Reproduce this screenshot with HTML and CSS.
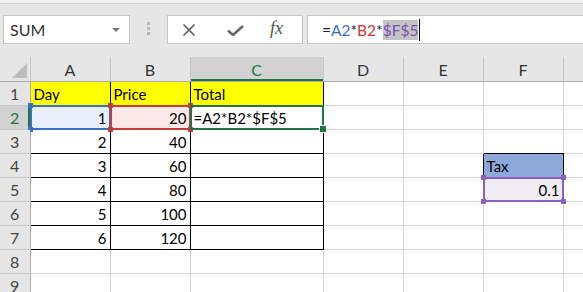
FILE: index.html
```html
<!DOCTYPE html>
<html lang="en">
<head>
    <meta charset="UTF-8">
    <title>Sheet - formula with absolute reference</title>
    <link rel="stylesheet" href="styles.css">
</head>
<body>
    <div class="top-strip"></div>
    <div class="bar">
        <div class="namebox">
            <span>SUM</span>
            <span class="caret"></span>
        </div>
        <div class="grip"><i></i><i></i><i></i></div>
        <div class="fxbox">
            <svg class="ic-cancel" width="14" height="12" viewBox="0 0 14 12">
                <path d="M1.5 0.5 L12.5 11.5 M12.5 0.5 L1.5 11.5" stroke="#5f5f5f" stroke-width="1.6" fill="none"/>
            </svg>
            <svg class="ic-ok" width="17" height="11" viewBox="0 0 17 11">
                <path d="M1 5.5 L6 10 L16 1" stroke="#6a6a6a" stroke-width="2.6" fill="none"/>
            </svg>
            <span class="fx">fx</span>
        </div>
        <div class="formula">
            <span>=</span><span class="r-blue">A2</span><span>*</span><span class="r-red">B2</span><span>*</span><span class="r-purple picked">$F$5</span><span class="cursor"></span>
        </div>
    </div>

    <table class="sheet">
        <colgroup>
            <col class="w-rh">
            <col class="w-col">
            <col class="w-col">
            <col class="w-wide">
            <col class="w-col">
            <col class="w-col">
            <col class="w-col">
            <col class="w-last">
        </colgroup>
        <tr class="heads">
            <th class="corner"><svg width="15" height="15" viewBox="0 0 15 15"><polygon points="15,0 15,15 0,15" fill="#bdbdbd"/></svg></th>
            <th>A</th>
            <th>B</th>
            <th class="on">C</th>
            <th>D</th>
            <th>E</th>
            <th>F</th>
            <th></th>
        </tr>
        <tr>
            <td class="rh">1</td>
            <td class="k yel">Day</td>
            <td class="k yel">Price</td>
            <td class="k yel">Total</td>
            <td></td><td></td><td></td><td></td>
        </tr>
        <tr>
            <td class="rh on">2</td>
            <td class="k n fill-blue">1<span class="ref blue"><i></i><i></i><i></i><i></i></span></td>
            <td class="k n fill-red">20<span class="ref red"><i></i><i></i><i></i><i></i></span></td>
            <td class="k">=A2*B2*$F$5<span class="active"><i></i></span></td>
            <td></td><td></td><td></td><td></td>
        </tr>
        <tr>
            <td class="rh">3</td>
            <td class="k n">2</td>
            <td class="k n">40</td>
            <td class="k"></td>
            <td></td><td></td><td class="kb"></td><td></td>
        </tr>
        <tr>
            <td class="rh">4</td>
            <td class="k n">3</td>
            <td class="k n">60</td>
            <td class="k"></td>
            <td></td><td class="kr"></td><td class="k tax">Tax</td><td></td>
        </tr>
        <tr>
            <td class="rh">5</td>
            <td class="k n">4</td>
            <td class="k n">80</td>
            <td class="k"></td>
            <td></td><td></td><td class="n fill-purple">0.1<span class="ref purple"><i></i><i></i><i></i><i></i></span></td><td></td>
        </tr>
        <tr>
            <td class="rh">6</td>
            <td class="k n">5</td>
            <td class="k n">100</td>
            <td class="k"></td>
            <td></td><td></td><td></td><td></td>
        </tr>
        <tr>
            <td class="rh">7</td>
            <td class="k n">6</td>
            <td class="k n">120</td>
            <td class="k"></td>
            <td></td><td></td><td></td><td></td>
        </tr>
        <tr>
            <td class="rh">8</td>
            <td></td><td></td><td></td><td></td><td></td><td></td><td></td>
        </tr>
        <tr>
            <td class="rh">9</td>
            <td></td><td></td><td></td><td></td><td></td><td></td><td></td>
        </tr>
    </table>
</body>
</html>
```

FILE: styles.css
```css
* {
    box-sizing: border-box;
}
body {
    margin: 0;
    width: 583px;
    height: 292px;
    overflow: hidden;
    background: #e6e6e6;
    font-family: Lato, "Liberation Sans", sans-serif;
    font-size: 15px;
    color: #000;
}

/* formula bar */
.top-strip {
    height: 4px;
    background: #f1f1f1;
    border-bottom: 1px solid #d4d4d4;
}
.bar {
    display: flex;
    align-items: flex-start;
    height: 53px;
    padding-top: 11px;
}
.namebox {
    margin-left: 3px;
    width: 127px;
    height: 29px;
    background: #fff;
    border: 1px solid #c6c6c6;
    display: flex;
    align-items: center;
    padding-left: 6px;
    color: #333;
    font-size: 16px;
}
.caret {
    margin-left: auto;
    margin-right: 9px;
    border-left: 4px solid transparent;
    border-right: 4px solid transparent;
    border-top: 4px solid #7a7a7a;
}
.grip {
    margin-left: 17px;
    margin-top: 7px;
    display: flex;
    flex-direction: column;
    gap: 2px;
}
.grip i {
    width: 3px;
    height: 3px;
    background: #b4b4b4;
}
.fxbox {
    margin-left: 17px;
    width: 136px;
    height: 29px;
    background: #fff;
    border: 1px solid #c6c6c6;
    display: flex;
    align-items: center;
}
.ic-cancel {
    margin-left: 14px;
}
.ic-ok {
    margin-left: 31px;
    margin-top: 2px;
}
.fx {
    margin-left: 26px;
    font-family: "Liberation Serif", serif;
    font-style: italic;
    font-size: 18px;
    color: #555;
    margin-top: -3px;
}
.formula {
    margin-left: 4px;
    flex: 1;
    height: 29px;
    background: #fff;
    border: 1px solid #c6c6c6;
    border-right: none;
    display: flex;
    align-items: center;
    padding-left: 14px;
    font-size: 15.5px;
    color: #222;
}
.r-blue { color: #3572c8; }
.r-red { color: #d13438; }
.r-purple { color: #7e4fb4; }
.picked {
    background: #c4c4c4;
    line-height: 20px;
}
.cursor {
    width: 1px;
    height: 22px;
    background: #000;
    margin-left: 1px;
    margin-top: 1px;
}

/* grid */
.sheet {
    border-collapse: collapse;
    table-layout: fixed;
    width: 583px;
    background: #fff;
}
.w-rh { width: 30px; }
.w-col { width: 80px; }
.w-wide { width: 133px; }
.w-last { width: 20px; }
.sheet tr {
    height: 24px;
}
.sheet td,
.sheet th {
    position: relative;
    padding: 2px 3px 0;
    border-right: 1px solid #d4d4d4;
    border-bottom: 1px solid #d4d4d4;
    white-space: nowrap;
    overflow: visible;
    text-align: left;
    line-height: 20px;
}
.sheet th {
    background: #e6e6e6;
    font-weight: normal;
    text-align: center;
    color: #333;
    border-right-color: #c6c6c6;
    border-bottom-color: #ababab;
    font-size: 16px;
}
.sheet th.on {
    background: #d2d2d2;
    color: #217346;
    box-shadow: inset 0 -2px 0 #217346;
}
.corner {
    padding: 0;
}
.corner svg {
    position: absolute;
    right: 3px;
    bottom: 3px;
}
.rh {
    background: #e6e6e6;
    text-align: center !important;
    color: #444;
    font-size: 16px;
    border-right-color: #ababab !important;
    border-bottom-color: #c8c8c8 !important;
}
.rh.on {
    background: #d2d2d2;
    color: #217346;
    box-shadow: inset -2px 0 0 #217346;
}
.sheet td.k {
    border-right-color: #000;
    border-bottom-color: #000;
}
.sheet td.kb {
    border-bottom-color: #000;
}
.sheet td.kr {
    border-right-color: #000;
}
.sheet td.n {
    text-align: right;
}
.yel { background: #ffff00; }
.tax { background: #8eaadb; }
.fill-blue { background: #e8eef8; }
.fill-red { background: #fbe9e9; }
.fill-purple { background: #f0edf7; }

/* reference highlights */
.ref,
.active {
    position: absolute;
    top: -1px;
    left: -1px;
    right: -1px;
    bottom: -1px;
    border: 2px solid;
    pointer-events: none;
}
.ref i,
.active i {
    position: absolute;
    width: 5px;
    height: 5px;
    background: currentColor;
}
.ref i:nth-child(1) { top: -4px; left: -4px; }
.ref i:nth-child(2) { top: -4px; right: -4px; }
.ref i:nth-child(3) { bottom: -4px; left: -4px; }
.ref i:nth-child(4) { bottom: -4px; right: -4px; }
.blue { color: #3a70c4; border-color: #3a70c4; }
.red { color: #c43b3b; border-color: #c43b3b; }
.purple { color: #8a5fbe; border-color: #8a5fbe; }
.active {
    color: #217346;
    border-color: #217346;
}
.active i {
    right: -4px;
    bottom: -4px;
    width: 6px;
    height: 6px;
    box-shadow: 0 0 0 1px #fff;
}
```
